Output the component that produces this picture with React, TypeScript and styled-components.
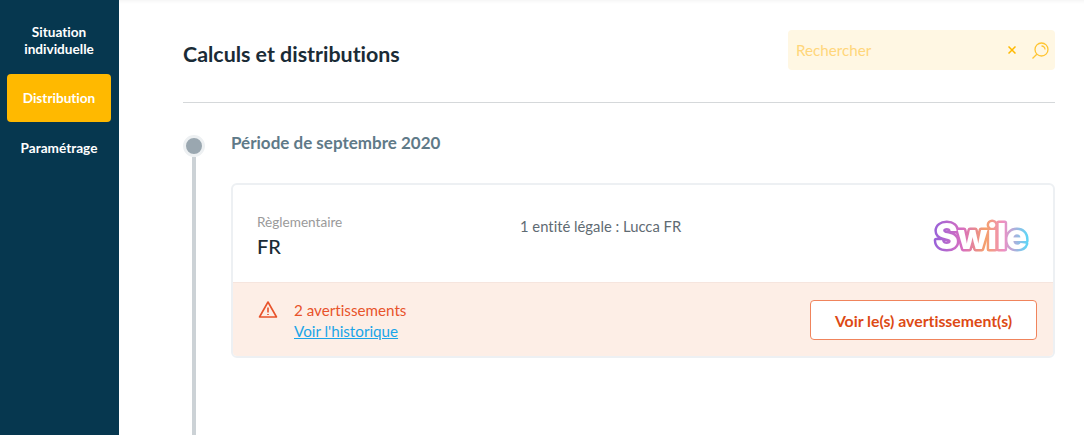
import React from 'react';
import styled, { createGlobalStyle } from 'styled-components';

const Global = createGlobalStyle`
  html, body {
    margin: 0;
    height: 100%;
    overflow: hidden;
    background: #fff;
    font-family: "Lato", "Noto Sans", sans-serif;
    font-variant-ligatures: none;
  }
  #root { height: 100%; }
`;

const Page = styled.div`
  display: flex;
  height: 435px;
  width: 1084px;
`;

const Sidebar = styled.nav`
  width: 119px;
  flex: none;
  background: #06374f;
  padding: 24px 8px 0 7px;
  box-sizing: border-box;
  display: flex;
  flex-direction: column;
`;

const NavItem = styled.a<{ $active?: boolean; $tall?: boolean }>`
  display: flex;
  align-items: center;
  justify-content: center;
  text-align: center;
  height: ${(p) => (p.$tall ? '34px' : '48px')};
  margin-bottom: ${(p) => (p.$tall ? '16px' : '2px')};
  border-radius: 4px;
  background: ${(p) => (p.$active ? '#ffb900' : 'transparent')};
  color: #fff;
  font-size: 13.6px;
  font-weight: 700;
  line-height: 17px;
`;

const Main = styled.main`
  flex: 1;
  padding: 30px 29px 0 64px;
  display: flex;
  flex-direction: column;
  box-shadow: inset 0 5px 5px -5px rgba(0, 0, 0, 0.08);
`;

const Header = styled.header`
  display: flex;
  justify-content: space-between;
  align-items: center;
  padding-bottom: 32px;
  border-bottom: 1px solid #d5d8da;
`;

const Title = styled.h1`
  margin: 7px 0 0;
  font-size: 21.4px;
  font-weight: 700;
  color: #1a2b36;
`;

const Search = styled.div`
  width: 267px;
  height: 40px;
  box-sizing: border-box;
  background: #fff7e3;
  border-radius: 4px;
  display: flex;
  align-items: center;
  padding: 0 6px 0 8px;
  color: #ffd67a;
  font-size: 15.2px;
`;

const Placeholder = styled.span`
  flex: 1;
`;

const IconRow = styled.span`
  display: flex;
  align-items: center;
  gap: 15px;
`;

const SearchGlyph = styled.svg`
  margin-top: 2px;
`;

const Timeline = styled.section`
  flex: 1;
  display: flex;
  gap: 26px;
  padding-top: 29px;
`;

const Rail = styled.div`
  width: 22px;
  padding-top: 3px;
  display: flex;
  flex-direction: column;
  align-items: center;
`;

const Dot = styled.div`
  width: 16px;
  height: 16px;
  border-radius: 50%;
  background: #9aa7b0;
  border: 3px solid #edf0f2;
  flex: none;
`;

const Line = styled.div`
  flex: 1;
  width: 4px;
  background: #ccd2d6;
`;

const Content = styled.div`
  flex: 1;
`;

const Period = styled.h2`
  margin: 0 0 30px;
  font-size: 17px;
  line-height: 21px;
  font-weight: 700;
  color: #5f7a88;
`;

const Card = styled.article`
  border: 2px solid #edf0f3;
  border-radius: 6px;
  overflow: hidden;
`;

const CardBody = styled.div`
  height: 97px;
  box-sizing: border-box;
  display: flex;
  padding: 29px 20px 0 24px;
`;

const Legal = styled.div`
  width: 263px;
`;

const Label = styled.div`
  font-size: 13.6px;
  line-height: 16px;
  color: #9a9a9a;
`;

const Name = styled.div`
  font-size: 20px;
  line-height: 26px;
  margin-top: 3px;
  font-weight: 500;
  color: #1a2b36;
`;

const Entity = styled.div`
  flex: 1;
  font-size: 14.8px;
  line-height: 20px;
  margin-top: 2px;
  color: #5f6b73;
`;

const Logo = styled.svg`
  margin-top: 1px;
  align-self: flex-start;
  filter: blur(0.5px);
`;

const Warning = styled.div`
  height: 74px;
  box-sizing: border-box;
  background: #fdeee6;
  border-top: 1px solid #f6e5de;
  display: flex;
  align-items: flex-start;
  padding: 16px 16px 0 25px;
`;

const WarningIcon = styled.svg`
  flex: none;
  margin-top: 1px;
`;

const WarningText = styled.div`
  flex: 1;
  margin: 1px 0 0 16px;
  font-size: 15.2px;
  line-height: 21px;
  color: #e8532b;
`;

const HistoryLink = styled.a`
  display: block;
  color: #1aa5e8;
  text-decoration: underline;
`;

const Button = styled.button`
  width: 227px;
  height: 40px;
  margin-top: 1px;
  background: #fff;
  border: 1px solid #f0845c;
  border-radius: 4px;
  color: #dd4a14;
  font-family: inherit;
  font-size: 15.8px;
  font-weight: 700;
  font-variant-ligatures: none;
`;

export default function App() {
  return (
    <Page>
      <Global />
      <Sidebar>
        <NavItem $tall>Situation<br />individuelle</NavItem>
        <NavItem $active>Distribution</NavItem>
        <NavItem>Paramétrage</NavItem>
      </Sidebar>
      <Main>
        <Header>
          <Title>Calculs et distributions</Title>
          <Search>
            <Placeholder>Rechercher</Placeholder>
            <IconRow>
              <svg width="8" height="8" viewBox="0 0 8 8" fill="none" stroke="#ffb900" strokeWidth="1.5">
                <path d="M0.5 0.5l7 7M7.5 0.5l-7 7" />
              </svg>
              <SearchGlyph width="18" height="18" viewBox="0 0 18 18" fill="none" stroke="#ffc533" strokeWidth="1.3">
                <circle cx="10.5" cy="7.5" r="6.5" />
                <path d="M5.8 12.2L1.5 16.5M10.5 4a3.5 3.5 0 0 1 3.5 3.5" />
              </SearchGlyph>
            </IconRow>
          </Search>
        </Header>
        <Timeline>
          <Rail>
            <Dot />
            <Line />
          </Rail>
          <Content>
            <Period>Période de septembre 2020</Period>
            <Card>
              <CardBody>
                <Legal>
                  <Label>Règlementaire</Label>
                  <Name>FR</Name>
                </Legal>
                <Entity>1 entité légale : Lucca FR</Entity>
                <Logo width="100" height="44" viewBox="0 0 100 44">
                  <defs>
                    <linearGradient id="swile" x1="0" x2="1" y1="0" y2="0">
                      <stop offset="0" stopColor="#9a62d8" />
                      <stop offset="0.3" stopColor="#d86fc0" />
                      <stop offset="0.55" stopColor="#f5a06a" />
                      <stop offset="0.75" stopColor="#ee8fc4" />
                      <stop offset="1" stopColor="#63d4f5" />
                    </linearGradient>
                  </defs>
                  <text
                    x="2"
                    y="34"
                    fontFamily="Inter, sans-serif"
                    fontSize="35"
                    fontWeight="800"
                    letterSpacing="-0.5"
                    fill="#fff"
                    stroke="url(#swile)"
                    strokeWidth="5"
                    strokeLinejoin="round"
                    paintOrder="stroke"
                  >
                    Swile
                  </text>
                </Logo>
              </CardBody>
              <Warning>
                <WarningIcon width="20" height="20" viewBox="0 0 20 20" fill="none" stroke="#e8532b" strokeWidth="1.6" strokeLinejoin="round">
                  <path d="M10 2L18.5 17H1.5z" />
                  <path d="M10 7.5v5M10 14v1" />
                </WarningIcon>
                <WarningText>
                  2 avertissements
                  <HistoryLink>Voir l'historique</HistoryLink>
                </WarningText>
                <Button>Voir le(s) avertissement(s)</Button>
              </Warning>
            </Card>
          </Content>
        </Timeline>
      </Main>
    </Page>
  );
}
